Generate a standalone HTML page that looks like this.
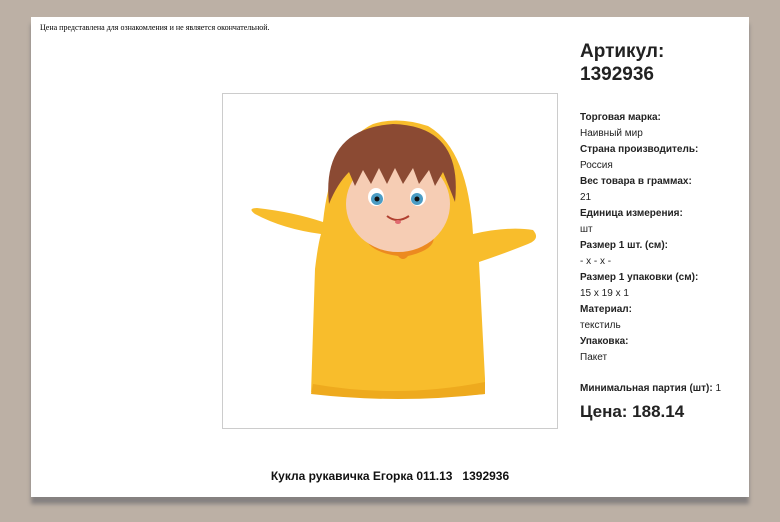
<!DOCTYPE html>
<html><head><meta charset="utf-8"><style>
body{margin:0;width:780px;height:522px;background:#bcb0a5;position:relative;overflow:hidden;font-family:"Liberation Sans",Arial,sans-serif;color:#222}
.page{position:absolute;left:31px;top:17px;width:718px;height:480px;background:#fff;box-shadow:0 7px 4px #858180}
.note{position:absolute;left:40px;top:23px;font-family:"Liberation Serif",serif;font-size:8px;color:#000}
.img{position:absolute;left:222px;top:93px;width:334px;height:334px;border:1px solid #ccc;background:#fff}
.art{position:absolute;left:580px;top:40px;font-size:19px;font-weight:bold;line-height:23px;color:#222}
.info{position:absolute;left:580px;top:110px;font-size:10px;line-height:16px;color:#222}
.info b{font-weight:bold}
.min{position:absolute;left:580px;top:383px;font-size:10px;font-weight:bold}
.min span{font-weight:normal}
.price{position:absolute;left:580px;top:402px;font-size:17px;font-weight:bold}
.title{position:absolute;left:0;width:780px;text-align:center;top:469px;font-size:12px;font-weight:bold;color:#111}
</style></head><body>
<div class="page"></div>
<div class="note">Цена представлена для ознакомления и не является окончательной.</div>
<div class="img">
<svg width="334" height="334" viewBox="0 0 334 334">
<path d="M88 300 L92 175 Q95 150 98 140 Q60 135 32 120 Q24 114 34 114 Q70 118 100 128 Q108 50 150 30 Q175 22 205 32 Q245 55 250 140 Q285 132 310 136 Q318 145 305 150 Q280 160 256 168 L262 285 L262 300 Q175 308 88 298 Z" fill="#f8bd2c"/>
<path d="M90 290 Q175 305 262 288 L262 300 Q175 310 88 300Z" fill="#eeaa1e"/>
<path d="M140 140 Q175 165 210 140 Q215 155 185 162 Q180 168 175 162 Q145 158 140 140Z" fill="#ec8a20"/>
<ellipse cx="175" cy="110" rx="52" ry="48" fill="#f6cdb4"/>
<path d="M106 110 Q98 35 170 30 Q240 32 232 108 Q225 90 220 78 L212 92 L206 76 L196 90 L190 74 L180 90 L172 74 L164 90 L156 74 L148 90 L140 76 L132 92 L126 78 Q114 90 106 110Z" fill="#8b4a33"/>
<ellipse cx="153" cy="103" rx="8" ry="9" fill="#fff"/><ellipse cx="195" cy="103" rx="8" ry="9" fill="#fff"/>
<circle cx="154" cy="105" r="6" fill="#4a9cc4"/><circle cx="194" cy="105" r="6" fill="#4a9cc4"/>
<circle cx="154" cy="105" r="2.5" fill="#111"/><circle cx="194" cy="105" r="2.5" fill="#111"/>
<path d="M164 122 Q174 130 186 122" stroke="#b04030" stroke-width="2" fill="none"/>
<ellipse cx="175" cy="128" rx="3" ry="2" fill="#e06a70"/>
</svg>
</div>
<div class="art">Артикул:<br>1392936</div>
<div class="info">
<b>Торговая марка:</b><br>Наивный мир<br>
<b>Страна производитель:</b><br>Россия<br>
<b>Вес товара в граммах:</b><br>21<br>
<b>Единица измерения:</b><br>шт<br>
<b>Размер 1 шт. (см):</b><br>- x - x -<br>
<b>Размер 1 упаковки (см):</b><br>15 x 19 x 1<br>
<b>Материал:</b><br>текстиль<br>
<b>Упаковка:</b><br>Пакет
</div>
<div class="min">Минимальная партия (шт): <span>1</span></div>
<div class="price">Цена: 188.14</div>
<div class="title">Кукла рукавичка Егорка 011.13&nbsp;&nbsp; 1392936</div>
</body></html>
